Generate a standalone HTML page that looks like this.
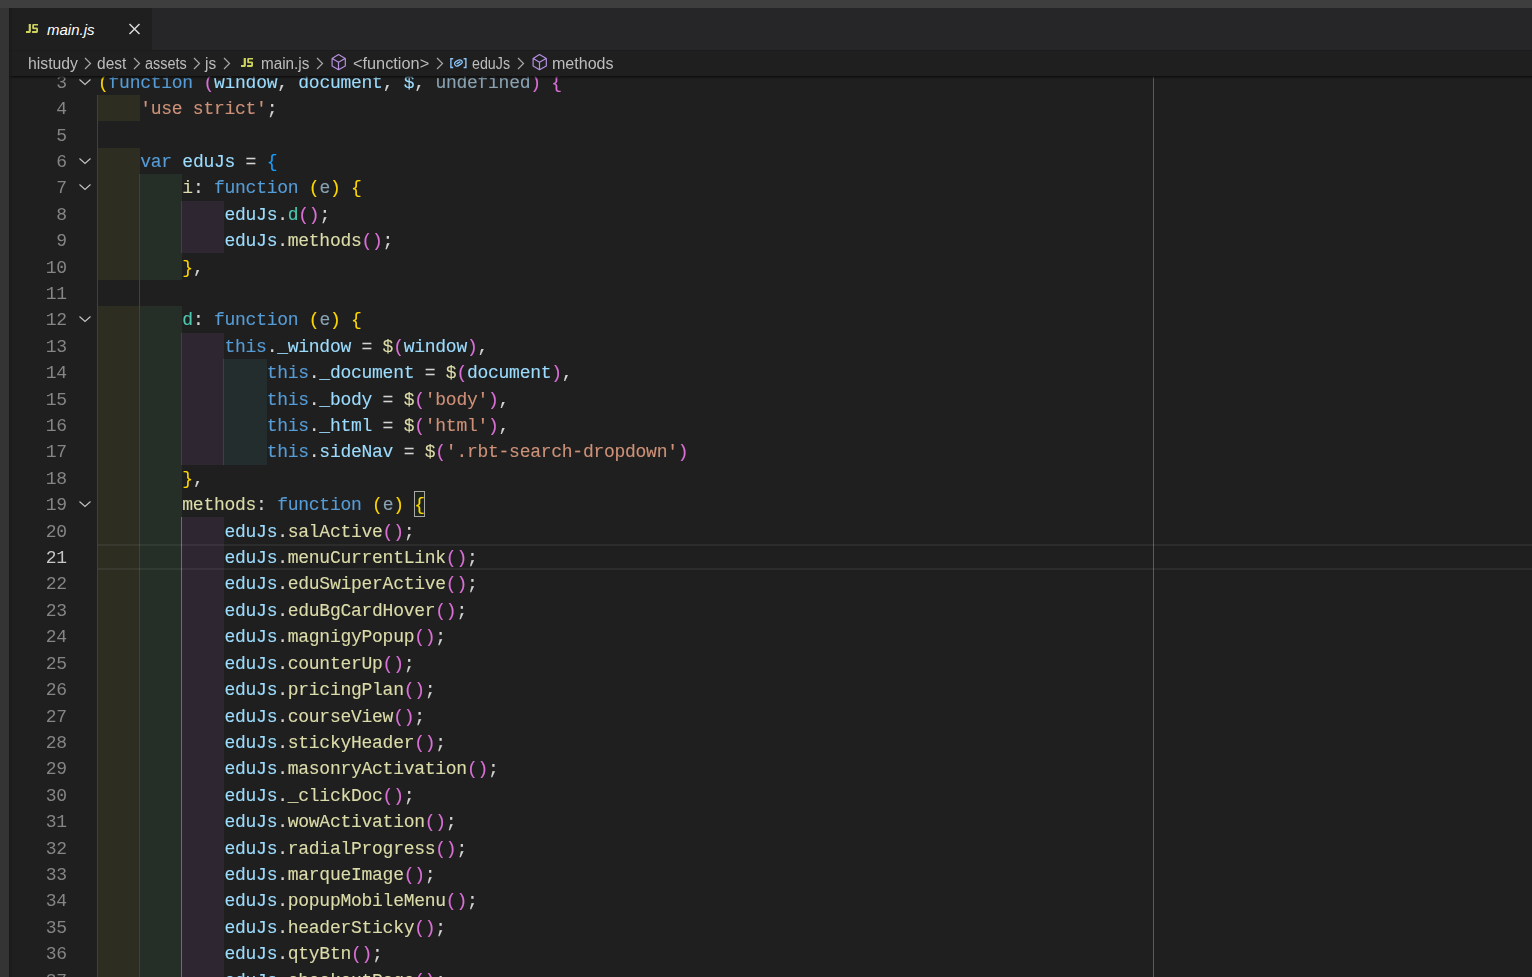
<!DOCTYPE html>
<html><head><meta charset="utf-8"><style>
html,body{margin:0;padding:0;}
body{width:1532px;height:977px;overflow:hidden;background:#1f1f1f;position:relative;font-family:"Liberation Sans",sans-serif;}
.topstrip{position:absolute;left:0;top:0;width:1532px;height:8px;background:#3e3e3e;}
.leftstrip{position:absolute;left:0;top:8px;width:9px;height:969px;background:#343434;}
.tabbar{position:absolute;left:9px;top:8px;width:1523px;height:42px;background:#262629;}
.tab{position:absolute;left:9px;top:8px;width:143px;height:42px;background:#1f1f1f;}
.crumbs{position:absolute;left:9px;top:50px;width:1523px;height:26px;background:#1f1f1f;z-index:5;box-sizing:border-box;border-top:1px solid #1c1c1c;}
.shadow{position:absolute;left:9px;top:76px;width:1523px;height:3px;background:linear-gradient(rgba(12,12,12,0.95) 0,rgba(16,16,16,0.6) 45%,rgba(20,20,20,0) 100%);z-index:5;}
.editor{position:absolute;left:9px;top:76px;width:1523px;height:901px;overflow:hidden;will-change:transform;}
.editor .inner{position:absolute;left:-9px;top:-76px;width:1532px;height:977px;}
.rb{position:absolute;}
.cur{position:absolute;left:98px;width:1434px;box-sizing:border-box;border-top:2px solid rgba(255,255,255,0.06);border-bottom:2px solid rgba(255,255,255,0.06);z-index:2;}
.ig{position:absolute;width:1px;background:#404040;}
.ig.act{background:#6e6e6e;}
.bm{position:absolute;box-sizing:border-box;border:1px solid #a8a8a8;background:rgba(0,100,0,0.08);}
.ln{position:absolute;left:98px;height:26.405px;line-height:26.405px;white-space:pre;font-family:"Liberation Mono",monospace;font-size:18px;letter-spacing:-0.262px;-webkit-text-stroke:0.12px;}
.num{position:absolute;left:9px;width:57.74px;text-align:right;height:26.405px;line-height:26.405px;font-family:"Liberation Mono",monospace;font-size:18px;letter-spacing:-0.262px;color:#858585;}
.num.act{color:#c6c6c6;}
.fold{position:absolute;left:78px;}
.ruler{position:absolute;left:1153px;top:76px;width:1px;height:901px;background:#5a5a5a;}
.ct{position:absolute;font-size:16px;color:#bdbdbd;white-space:nowrap;line-height:26px;top:50.5px;transform-origin:0 0;}
.sep{position:absolute;top:57px;}
.jsico{position:absolute;font-weight:bold;font-size:12.5px;color:#cbcb41;letter-spacing:-0.6px;line-height:12px;}
</style></head><body>
<div class="topstrip"></div>
<div class="leftstrip"></div>
<div style="position:absolute;left:9px;top:8px;width:1px;height:969px;background:#181818;z-index:8"></div><div style="position:absolute;left:11px;top:8px;width:1px;height:969px;background:#1a1a1a;z-index:8"></div>
<div class="tabbar"></div>
<div class="tab"></div>
<svg style="position:absolute;left:20.8px;top:19.8px" width="22" height="18" viewBox="0 0 22 18"><path d="M7.7 3.9 H9.9 V11.6 Q9.9 12.9 8.6 12.9 H5 V11.1 H7.7 Z" fill="#cdd35c"/><path d="M12.6 3.9 H17 V5.6 H13 V7.5 H15.6 Q17 7.5 17 8.9 V11.5 Q17 12.9 15.6 12.9 H11.1 V11.1 H15.2 V9.3 H12.6 Q11.2 9.3 11.2 7.9 V5.3 Q11.2 3.9 12.6 3.9 Z" fill="#cdd35c"/></svg>
<div style="position:absolute;left:47px;top:19px;font-style:italic;font-size:15px;color:#ffffff;line-height:22px;white-space:nowrap">main.js</div>
<svg style="position:absolute;left:128px;top:23px" width="13" height="12" viewBox="0 0 13 12"><path d="M1.5 1 L11.5 11 M11.5 1 L1.5 11" stroke="#d8d8d8" stroke-width="1.5" fill="none"/></svg>
<div class="crumbs"></div>
<div style="position:absolute;left:0;top:0;z-index:6">
<div class="ct" style="left:27.52px;transform:scaleX(0.9859)">histudy</div>
<div class="ct" style="left:96.82px;transform:scaleX(0.9694)">dest</div>
<div class="ct" style="left:145.37px;transform:scaleX(0.9022)">assets</div>
<div class="ct" style="left:205.39px;transform:scaleX(0.9649)">js</div>
<div class="ct" style="left:261.25px;transform:scaleX(0.9531)">main.js</div>
<div class="ct" style="left:352.98px;transform:scaleX(1.0191)">&lt;function&gt;</div>
<div class="ct" style="left:472.18px;transform:scaleX(0.8913)">eduJs</div>
<div class="ct" style="left:551.70px;transform:scaleX(1.0034)">methods</div>
<svg class="sep" style="left:84px" width="8" height="13" viewBox="0 0 8 13"><path d="M1 1 L6.5 6.5 L1 12" stroke="#a8a8a8" stroke-width="1.2" fill="none"/></svg>
<svg class="sep" style="left:133px" width="8" height="13" viewBox="0 0 8 13"><path d="M1 1 L6.5 6.5 L1 12" stroke="#a8a8a8" stroke-width="1.2" fill="none"/></svg>
<svg class="sep" style="left:192.5px" width="8" height="13" viewBox="0 0 8 13"><path d="M1 1 L6.5 6.5 L1 12" stroke="#a8a8a8" stroke-width="1.2" fill="none"/></svg>
<svg class="sep" style="left:222.5px" width="8" height="13" viewBox="0 0 8 13"><path d="M1 1 L6.5 6.5 L1 12" stroke="#a8a8a8" stroke-width="1.2" fill="none"/></svg>
<svg class="sep" style="left:316px" width="8" height="13" viewBox="0 0 8 13"><path d="M1 1 L6.5 6.5 L1 12" stroke="#a8a8a8" stroke-width="1.2" fill="none"/></svg>
<svg class="sep" style="left:436px" width="8" height="13" viewBox="0 0 8 13"><path d="M1 1 L6.5 6.5 L1 12" stroke="#a8a8a8" stroke-width="1.2" fill="none"/></svg>
<svg class="sep" style="left:516.5px" width="8" height="13" viewBox="0 0 8 13"><path d="M1 1 L6.5 6.5 L1 12" stroke="#a8a8a8" stroke-width="1.2" fill="none"/></svg>
<svg style="position:absolute;left:236px;top:54px" width="22" height="18" viewBox="0 0 22 18"><path d="M7.7 3.9 H9.9 V11.6 Q9.9 12.9 8.6 12.9 H5 V11.1 H7.7 Z" fill="#cdd35c"/><path d="M12.6 3.9 H17 V5.6 H13 V7.5 H15.6 Q17 7.5 17 8.9 V11.5 Q17 12.9 15.6 12.9 H11.1 V11.1 H15.2 V9.3 H12.6 Q11.2 9.3 11.2 7.9 V5.3 Q11.2 3.9 12.6 3.9 Z" fill="#cdd35c"/></svg>
<svg style="position:absolute;left:326px;top:50px" width="26" height="24" viewBox="0 0 26 24"><path d="M12.5 4.6 L19.3 8.4 L19.3 16 L12.5 19.7 L6.1 16 L6.1 8.4 Z M6.3 8.5 L12.5 12.2 L19.1 8.5 M12.5 12.2 L12.5 19.5" stroke="#b68fe0" stroke-width="1.2" fill="none" stroke-linejoin="round"/></svg>
<svg style="position:absolute;left:526.7px;top:50px" width="26" height="24" viewBox="0 0 26 24"><path d="M12.5 4.6 L19.3 8.4 L19.3 16 L12.5 19.7 L6.1 16 L6.1 8.4 Z M6.3 8.5 L12.5 12.2 L19.1 8.5 M12.5 12.2 L12.5 19.5" stroke="#b68fe0" stroke-width="1.2" fill="none" stroke-linejoin="round"/></svg>
<svg style="position:absolute;left:444px;top:52px" width="30" height="22" viewBox="0 0 30 22"><path d="M9.2 6.8 L6.9 6.8 L6.9 15.5 L9.2 15.5 M19.6 6.8 L21.9 6.8 L21.9 15.5 L19.6 15.5" stroke="#8fc4f2" stroke-width="1.4" fill="none"/><path d="M10.6 12 Q10.3 10.6 11.8 9.6 L14 8.3 Q15.3 7.6 16.8 8.2 Q18.6 9 18.3 10.4 Q18.1 11.3 16.8 12.1 L14.4 13.6 Q13.1 14.4 11.9 13.8 Q10.8 13.2 10.6 12 Z M12.6 11.9 L16.4 9.6" stroke="#8cc8ff" stroke-width="1.3" fill="none"/></svg>
</div>
<div class="shadow"></div>
<div class="editor"><div class="inner">
<div class="rb" style="left:98.00px;top:95.00px;width:42.16px;height:26.41px;background:#2d2d22"></div>
<div class="rb" style="left:98.00px;top:147.81px;width:42.16px;height:26.41px;background:#2d2d22"></div>
<div class="rb" style="left:98.00px;top:174.22px;width:42.16px;height:26.41px;background:#2d2d22"></div>
<div class="rb" style="left:140.16px;top:174.22px;width:42.16px;height:26.41px;background:#262f27"></div>
<div class="rb" style="left:98.00px;top:200.62px;width:42.16px;height:26.41px;background:#2d2d22"></div>
<div class="rb" style="left:140.16px;top:200.62px;width:42.16px;height:26.41px;background:#262f27"></div>
<div class="rb" style="left:182.32px;top:200.62px;width:42.16px;height:26.41px;background:#2e2630"></div>
<div class="rb" style="left:98.00px;top:227.03px;width:42.16px;height:26.41px;background:#2d2d22"></div>
<div class="rb" style="left:140.16px;top:227.03px;width:42.16px;height:26.41px;background:#262f27"></div>
<div class="rb" style="left:182.32px;top:227.03px;width:42.16px;height:26.41px;background:#2e2630"></div>
<div class="rb" style="left:98.00px;top:253.43px;width:42.16px;height:26.41px;background:#2d2d22"></div>
<div class="rb" style="left:140.16px;top:253.43px;width:42.16px;height:26.41px;background:#262f27"></div>
<div class="rb" style="left:98.00px;top:306.24px;width:42.16px;height:26.41px;background:#2d2d22"></div>
<div class="rb" style="left:140.16px;top:306.24px;width:42.16px;height:26.41px;background:#262f27"></div>
<div class="rb" style="left:98.00px;top:332.64px;width:42.16px;height:26.41px;background:#2d2d22"></div>
<div class="rb" style="left:140.16px;top:332.64px;width:42.16px;height:26.41px;background:#262f27"></div>
<div class="rb" style="left:182.32px;top:332.64px;width:42.16px;height:26.41px;background:#2e2630"></div>
<div class="rb" style="left:98.00px;top:359.05px;width:42.16px;height:26.41px;background:#2d2d22"></div>
<div class="rb" style="left:140.16px;top:359.05px;width:42.16px;height:26.41px;background:#262f27"></div>
<div class="rb" style="left:182.32px;top:359.05px;width:42.16px;height:26.41px;background:#2e2630"></div>
<div class="rb" style="left:224.48px;top:359.05px;width:42.16px;height:26.41px;background:#232d2e"></div>
<div class="rb" style="left:98.00px;top:385.46px;width:42.16px;height:26.41px;background:#2d2d22"></div>
<div class="rb" style="left:140.16px;top:385.46px;width:42.16px;height:26.41px;background:#262f27"></div>
<div class="rb" style="left:182.32px;top:385.46px;width:42.16px;height:26.41px;background:#2e2630"></div>
<div class="rb" style="left:224.48px;top:385.46px;width:42.16px;height:26.41px;background:#232d2e"></div>
<div class="rb" style="left:98.00px;top:411.86px;width:42.16px;height:26.41px;background:#2d2d22"></div>
<div class="rb" style="left:140.16px;top:411.86px;width:42.16px;height:26.41px;background:#262f27"></div>
<div class="rb" style="left:182.32px;top:411.86px;width:42.16px;height:26.41px;background:#2e2630"></div>
<div class="rb" style="left:224.48px;top:411.86px;width:42.16px;height:26.41px;background:#232d2e"></div>
<div class="rb" style="left:98.00px;top:438.26px;width:42.16px;height:26.41px;background:#2d2d22"></div>
<div class="rb" style="left:140.16px;top:438.26px;width:42.16px;height:26.41px;background:#262f27"></div>
<div class="rb" style="left:182.32px;top:438.26px;width:42.16px;height:26.41px;background:#2e2630"></div>
<div class="rb" style="left:224.48px;top:438.26px;width:42.16px;height:26.41px;background:#232d2e"></div>
<div class="rb" style="left:98.00px;top:464.67px;width:42.16px;height:26.41px;background:#2d2d22"></div>
<div class="rb" style="left:140.16px;top:464.67px;width:42.16px;height:26.41px;background:#262f27"></div>
<div class="rb" style="left:98.00px;top:491.08px;width:42.16px;height:26.41px;background:#2d2d22"></div>
<div class="rb" style="left:140.16px;top:491.08px;width:42.16px;height:26.41px;background:#262f27"></div>
<div class="rb" style="left:98.00px;top:517.48px;width:42.16px;height:26.41px;background:#2d2d22"></div>
<div class="rb" style="left:140.16px;top:517.48px;width:42.16px;height:26.41px;background:#262f27"></div>
<div class="rb" style="left:182.32px;top:517.48px;width:42.16px;height:26.41px;background:#2e2630"></div>
<div class="rb" style="left:98.00px;top:543.88px;width:42.16px;height:26.41px;background:#2d2d22"></div>
<div class="rb" style="left:140.16px;top:543.88px;width:42.16px;height:26.41px;background:#262f27"></div>
<div class="rb" style="left:182.32px;top:543.88px;width:42.16px;height:26.41px;background:#2e2630"></div>
<div class="rb" style="left:98.00px;top:570.29px;width:42.16px;height:26.41px;background:#2d2d22"></div>
<div class="rb" style="left:140.16px;top:570.29px;width:42.16px;height:26.41px;background:#262f27"></div>
<div class="rb" style="left:182.32px;top:570.29px;width:42.16px;height:26.41px;background:#2e2630"></div>
<div class="rb" style="left:98.00px;top:596.70px;width:42.16px;height:26.41px;background:#2d2d22"></div>
<div class="rb" style="left:140.16px;top:596.70px;width:42.16px;height:26.41px;background:#262f27"></div>
<div class="rb" style="left:182.32px;top:596.70px;width:42.16px;height:26.41px;background:#2e2630"></div>
<div class="rb" style="left:98.00px;top:623.10px;width:42.16px;height:26.41px;background:#2d2d22"></div>
<div class="rb" style="left:140.16px;top:623.10px;width:42.16px;height:26.41px;background:#262f27"></div>
<div class="rb" style="left:182.32px;top:623.10px;width:42.16px;height:26.41px;background:#2e2630"></div>
<div class="rb" style="left:98.00px;top:649.50px;width:42.16px;height:26.41px;background:#2d2d22"></div>
<div class="rb" style="left:140.16px;top:649.50px;width:42.16px;height:26.41px;background:#262f27"></div>
<div class="rb" style="left:182.32px;top:649.50px;width:42.16px;height:26.41px;background:#2e2630"></div>
<div class="rb" style="left:98.00px;top:675.91px;width:42.16px;height:26.41px;background:#2d2d22"></div>
<div class="rb" style="left:140.16px;top:675.91px;width:42.16px;height:26.41px;background:#262f27"></div>
<div class="rb" style="left:182.32px;top:675.91px;width:42.16px;height:26.41px;background:#2e2630"></div>
<div class="rb" style="left:98.00px;top:702.32px;width:42.16px;height:26.41px;background:#2d2d22"></div>
<div class="rb" style="left:140.16px;top:702.32px;width:42.16px;height:26.41px;background:#262f27"></div>
<div class="rb" style="left:182.32px;top:702.32px;width:42.16px;height:26.41px;background:#2e2630"></div>
<div class="rb" style="left:98.00px;top:728.72px;width:42.16px;height:26.41px;background:#2d2d22"></div>
<div class="rb" style="left:140.16px;top:728.72px;width:42.16px;height:26.41px;background:#262f27"></div>
<div class="rb" style="left:182.32px;top:728.72px;width:42.16px;height:26.41px;background:#2e2630"></div>
<div class="rb" style="left:98.00px;top:755.12px;width:42.16px;height:26.41px;background:#2d2d22"></div>
<div class="rb" style="left:140.16px;top:755.12px;width:42.16px;height:26.41px;background:#262f27"></div>
<div class="rb" style="left:182.32px;top:755.12px;width:42.16px;height:26.41px;background:#2e2630"></div>
<div class="rb" style="left:98.00px;top:781.53px;width:42.16px;height:26.41px;background:#2d2d22"></div>
<div class="rb" style="left:140.16px;top:781.53px;width:42.16px;height:26.41px;background:#262f27"></div>
<div class="rb" style="left:182.32px;top:781.53px;width:42.16px;height:26.41px;background:#2e2630"></div>
<div class="rb" style="left:98.00px;top:807.94px;width:42.16px;height:26.41px;background:#2d2d22"></div>
<div class="rb" style="left:140.16px;top:807.94px;width:42.16px;height:26.41px;background:#262f27"></div>
<div class="rb" style="left:182.32px;top:807.94px;width:42.16px;height:26.41px;background:#2e2630"></div>
<div class="rb" style="left:98.00px;top:834.34px;width:42.16px;height:26.41px;background:#2d2d22"></div>
<div class="rb" style="left:140.16px;top:834.34px;width:42.16px;height:26.41px;background:#262f27"></div>
<div class="rb" style="left:182.32px;top:834.34px;width:42.16px;height:26.41px;background:#2e2630"></div>
<div class="rb" style="left:98.00px;top:860.75px;width:42.16px;height:26.41px;background:#2d2d22"></div>
<div class="rb" style="left:140.16px;top:860.75px;width:42.16px;height:26.41px;background:#262f27"></div>
<div class="rb" style="left:182.32px;top:860.75px;width:42.16px;height:26.41px;background:#2e2630"></div>
<div class="rb" style="left:98.00px;top:887.15px;width:42.16px;height:26.41px;background:#2d2d22"></div>
<div class="rb" style="left:140.16px;top:887.15px;width:42.16px;height:26.41px;background:#262f27"></div>
<div class="rb" style="left:182.32px;top:887.15px;width:42.16px;height:26.41px;background:#2e2630"></div>
<div class="rb" style="left:98.00px;top:913.56px;width:42.16px;height:26.41px;background:#2d2d22"></div>
<div class="rb" style="left:140.16px;top:913.56px;width:42.16px;height:26.41px;background:#262f27"></div>
<div class="rb" style="left:182.32px;top:913.56px;width:42.16px;height:26.41px;background:#2e2630"></div>
<div class="rb" style="left:98.00px;top:939.96px;width:42.16px;height:26.41px;background:#2d2d22"></div>
<div class="rb" style="left:140.16px;top:939.96px;width:42.16px;height:26.41px;background:#262f27"></div>
<div class="rb" style="left:182.32px;top:939.96px;width:42.16px;height:26.41px;background:#2e2630"></div>
<div class="rb" style="left:98.00px;top:966.37px;width:42.16px;height:26.41px;background:#2d2d22"></div>
<div class="rb" style="left:140.16px;top:966.37px;width:42.16px;height:26.41px;background:#262f27"></div>
<div class="rb" style="left:182.32px;top:966.37px;width:42.16px;height:26.41px;background:#2e2630"></div>
<div class="cur" style="top:543.88px;height:26.41px"></div>
<div class="ig" style="left:97.00px;top:95.00px;height:897.77px"></div>
<div class="ig" style="left:139.16px;top:174.22px;height:818.56px"></div>
<div class="ig" style="left:181.32px;top:200.62px;height:52.81px"></div>
<div class="ig" style="left:181.32px;top:332.64px;height:132.03px"></div>
<div class="ig" style="left:223.48px;top:359.05px;height:105.62px"></div>
<div class="ig act" style="left:181.32px;top:517.48px;height:475.29px"></div>
<div class="bm" style="left:414.20px;top:490.78px;width:11.14px;height:26.41px"></div>
<div class="ln" style="top:69.80px"><span style="color:#ffd700">(</span><span style="color:#569cd6">function</span><span style="color:#d4d4d4"> </span><span style="color:#da70d6">(</span><span style="color:#9cdcfe">window</span><span style="color:#d4d4d4">, </span><span style="color:#9cdcfe">document</span><span style="color:#d4d4d4">, </span><span style="color:#9cdcfe">$</span><span style="color:#d4d4d4">, </span><span style="color:#8aa3b3">undefined</span><span style="color:#da70d6">)</span><span style="color:#d4d4d4"> </span><span style="color:#da70d6">{</span></div>
<div class="num" style="top:69.80px">3</div>
<svg class="fold" style="top:77.80px" width="14" height="8" viewBox="0 0 14 8"><path d="M1.5 1.5 L7 6.5 L12.5 1.5" fill="none" stroke="#c5c5c5" stroke-width="1.1"/></svg>
<div class="ln" style="top:96.20px"><span style="color:#d4d4d4">    </span><span style="color:#ce9178">&#x27;use strict&#x27;</span><span style="color:#d4d4d4">;</span></div>
<div class="num" style="top:96.20px">4</div>
<div class="ln" style="top:122.61px"></div>
<div class="num" style="top:122.61px">5</div>
<div class="ln" style="top:149.01px"><span style="color:#d4d4d4">    </span><span style="color:#569cd6">var</span><span style="color:#d4d4d4"> </span><span style="color:#9cdcfe">eduJs</span><span style="color:#d4d4d4"> = </span><span style="color:#179fff">{</span></div>
<div class="num" style="top:149.01px">6</div>
<svg class="fold" style="top:157.01px" width="14" height="8" viewBox="0 0 14 8"><path d="M1.5 1.5 L7 6.5 L12.5 1.5" fill="none" stroke="#c5c5c5" stroke-width="1.1"/></svg>
<div class="ln" style="top:175.41px"><span style="color:#d4d4d4">        </span><span style="color:#dcdcaa">i</span><span style="color:#d4d4d4">: </span><span style="color:#569cd6">function</span><span style="color:#d4d4d4"> </span><span style="color:#ffd700">(</span><span style="color:#8aa3b3">e</span><span style="color:#ffd700">)</span><span style="color:#d4d4d4"> </span><span style="color:#ffd700">{</span></div>
<div class="num" style="top:175.41px">7</div>
<svg class="fold" style="top:183.42px" width="14" height="8" viewBox="0 0 14 8"><path d="M1.5 1.5 L7 6.5 L12.5 1.5" fill="none" stroke="#c5c5c5" stroke-width="1.1"/></svg>
<div class="ln" style="top:201.82px"><span style="color:#d4d4d4">            </span><span style="color:#9cdcfe">eduJs</span><span style="color:#d4d4d4">.</span><span style="color:#4ec9b0">d</span><span style="color:#da70d6">(</span><span style="color:#da70d6">)</span><span style="color:#d4d4d4">;</span></div>
<div class="num" style="top:201.82px">8</div>
<div class="ln" style="top:228.22px"><span style="color:#d4d4d4">            </span><span style="color:#9cdcfe">eduJs</span><span style="color:#d4d4d4">.</span><span style="color:#dcdcaa">methods</span><span style="color:#da70d6">(</span><span style="color:#da70d6">)</span><span style="color:#d4d4d4">;</span></div>
<div class="num" style="top:228.22px">9</div>
<div class="ln" style="top:254.63px"><span style="color:#d4d4d4">        </span><span style="color:#ffd700">}</span><span style="color:#d4d4d4">,</span></div>
<div class="num" style="top:254.63px">10</div>
<div class="ln" style="top:281.04px"></div>
<div class="num" style="top:281.04px">11</div>
<div class="ln" style="top:307.44px"><span style="color:#d4d4d4">        </span><span style="color:#4ec9b0">d</span><span style="color:#d4d4d4">: </span><span style="color:#569cd6">function</span><span style="color:#d4d4d4"> </span><span style="color:#ffd700">(</span><span style="color:#8aa3b3">e</span><span style="color:#ffd700">)</span><span style="color:#d4d4d4"> </span><span style="color:#ffd700">{</span></div>
<div class="num" style="top:307.44px">12</div>
<svg class="fold" style="top:315.44px" width="14" height="8" viewBox="0 0 14 8"><path d="M1.5 1.5 L7 6.5 L12.5 1.5" fill="none" stroke="#c5c5c5" stroke-width="1.1"/></svg>
<div class="ln" style="top:333.84px"><span style="color:#d4d4d4">            </span><span style="color:#569cd6">this</span><span style="color:#d4d4d4">.</span><span style="color:#9cdcfe">_window</span><span style="color:#d4d4d4"> = </span><span style="color:#dcdcaa">$</span><span style="color:#da70d6">(</span><span style="color:#9cdcfe">window</span><span style="color:#da70d6">)</span><span style="color:#d4d4d4">,</span></div>
<div class="num" style="top:333.84px">13</div>
<div class="ln" style="top:360.25px"><span style="color:#d4d4d4">                </span><span style="color:#569cd6">this</span><span style="color:#d4d4d4">.</span><span style="color:#9cdcfe">_document</span><span style="color:#d4d4d4"> = </span><span style="color:#dcdcaa">$</span><span style="color:#da70d6">(</span><span style="color:#9cdcfe">document</span><span style="color:#da70d6">)</span><span style="color:#d4d4d4">,</span></div>
<div class="num" style="top:360.25px">14</div>
<div class="ln" style="top:386.66px"><span style="color:#d4d4d4">                </span><span style="color:#569cd6">this</span><span style="color:#d4d4d4">.</span><span style="color:#9cdcfe">_body</span><span style="color:#d4d4d4"> = </span><span style="color:#dcdcaa">$</span><span style="color:#da70d6">(</span><span style="color:#ce9178">&#x27;body&#x27;</span><span style="color:#da70d6">)</span><span style="color:#d4d4d4">,</span></div>
<div class="num" style="top:386.66px">15</div>
<div class="ln" style="top:413.06px"><span style="color:#d4d4d4">                </span><span style="color:#569cd6">this</span><span style="color:#d4d4d4">.</span><span style="color:#9cdcfe">_html</span><span style="color:#d4d4d4"> = </span><span style="color:#dcdcaa">$</span><span style="color:#da70d6">(</span><span style="color:#ce9178">&#x27;html&#x27;</span><span style="color:#da70d6">)</span><span style="color:#d4d4d4">,</span></div>
<div class="num" style="top:413.06px">16</div>
<div class="ln" style="top:439.46px"><span style="color:#d4d4d4">                </span><span style="color:#569cd6">this</span><span style="color:#d4d4d4">.</span><span style="color:#9cdcfe">sideNav</span><span style="color:#d4d4d4"> = </span><span style="color:#dcdcaa">$</span><span style="color:#da70d6">(</span><span style="color:#ce9178">&#x27;.rbt-search-dropdown&#x27;</span><span style="color:#da70d6">)</span></div>
<div class="num" style="top:439.46px">17</div>
<div class="ln" style="top:465.87px"><span style="color:#d4d4d4">        </span><span style="color:#ffd700">}</span><span style="color:#d4d4d4">,</span></div>
<div class="num" style="top:465.87px">18</div>
<div class="ln" style="top:492.28px"><span style="color:#d4d4d4">        </span><span style="color:#dcdcaa">methods</span><span style="color:#d4d4d4">: </span><span style="color:#569cd6">function</span><span style="color:#d4d4d4"> </span><span style="color:#ffd700">(</span><span style="color:#8aa3b3">e</span><span style="color:#ffd700">)</span><span style="color:#d4d4d4"> </span><span style="color:#ffd700">{</span></div>
<div class="num" style="top:492.28px">19</div>
<svg class="fold" style="top:500.28px" width="14" height="8" viewBox="0 0 14 8"><path d="M1.5 1.5 L7 6.5 L12.5 1.5" fill="none" stroke="#c5c5c5" stroke-width="1.1"/></svg>
<div class="ln" style="top:518.68px"><span style="color:#d4d4d4">            </span><span style="color:#9cdcfe">eduJs</span><span style="color:#d4d4d4">.</span><span style="color:#dcdcaa">salActive</span><span style="color:#da70d6">(</span><span style="color:#da70d6">)</span><span style="color:#d4d4d4">;</span></div>
<div class="num" style="top:518.68px">20</div>
<div class="ln" style="top:545.09px"><span style="color:#d4d4d4">            </span><span style="color:#9cdcfe">eduJs</span><span style="color:#d4d4d4">.</span><span style="color:#dcdcaa">menuCurrentLink</span><span style="color:#da70d6">(</span><span style="color:#da70d6">)</span><span style="color:#d4d4d4">;</span></div>
<div class="num act" style="top:545.09px">21</div>
<div class="ln" style="top:571.49px"><span style="color:#d4d4d4">            </span><span style="color:#9cdcfe">eduJs</span><span style="color:#d4d4d4">.</span><span style="color:#dcdcaa">eduSwiperActive</span><span style="color:#da70d6">(</span><span style="color:#da70d6">)</span><span style="color:#d4d4d4">;</span></div>
<div class="num" style="top:571.49px">22</div>
<div class="ln" style="top:597.90px"><span style="color:#d4d4d4">            </span><span style="color:#9cdcfe">eduJs</span><span style="color:#d4d4d4">.</span><span style="color:#dcdcaa">eduBgCardHover</span><span style="color:#da70d6">(</span><span style="color:#da70d6">)</span><span style="color:#d4d4d4">;</span></div>
<div class="num" style="top:597.90px">23</div>
<div class="ln" style="top:624.30px"><span style="color:#d4d4d4">            </span><span style="color:#9cdcfe">eduJs</span><span style="color:#d4d4d4">.</span><span style="color:#dcdcaa">magnigyPopup</span><span style="color:#da70d6">(</span><span style="color:#da70d6">)</span><span style="color:#d4d4d4">;</span></div>
<div class="num" style="top:624.30px">24</div>
<div class="ln" style="top:650.71px"><span style="color:#d4d4d4">            </span><span style="color:#9cdcfe">eduJs</span><span style="color:#d4d4d4">.</span><span style="color:#dcdcaa">counterUp</span><span style="color:#da70d6">(</span><span style="color:#da70d6">)</span><span style="color:#d4d4d4">;</span></div>
<div class="num" style="top:650.71px">25</div>
<div class="ln" style="top:677.11px"><span style="color:#d4d4d4">            </span><span style="color:#9cdcfe">eduJs</span><span style="color:#d4d4d4">.</span><span style="color:#dcdcaa">pricingPlan</span><span style="color:#da70d6">(</span><span style="color:#da70d6">)</span><span style="color:#d4d4d4">;</span></div>
<div class="num" style="top:677.11px">26</div>
<div class="ln" style="top:703.52px"><span style="color:#d4d4d4">            </span><span style="color:#9cdcfe">eduJs</span><span style="color:#d4d4d4">.</span><span style="color:#dcdcaa">courseView</span><span style="color:#da70d6">(</span><span style="color:#da70d6">)</span><span style="color:#d4d4d4">;</span></div>
<div class="num" style="top:703.52px">27</div>
<div class="ln" style="top:729.92px"><span style="color:#d4d4d4">            </span><span style="color:#9cdcfe">eduJs</span><span style="color:#d4d4d4">.</span><span style="color:#dcdcaa">stickyHeader</span><span style="color:#da70d6">(</span><span style="color:#da70d6">)</span><span style="color:#d4d4d4">;</span></div>
<div class="num" style="top:729.92px">28</div>
<div class="ln" style="top:756.33px"><span style="color:#d4d4d4">            </span><span style="color:#9cdcfe">eduJs</span><span style="color:#d4d4d4">.</span><span style="color:#dcdcaa">masonryActivation</span><span style="color:#da70d6">(</span><span style="color:#da70d6">)</span><span style="color:#d4d4d4">;</span></div>
<div class="num" style="top:756.33px">29</div>
<div class="ln" style="top:782.73px"><span style="color:#d4d4d4">            </span><span style="color:#9cdcfe">eduJs</span><span style="color:#d4d4d4">.</span><span style="color:#dcdcaa">_clickDoc</span><span style="color:#da70d6">(</span><span style="color:#da70d6">)</span><span style="color:#d4d4d4">;</span></div>
<div class="num" style="top:782.73px">30</div>
<div class="ln" style="top:809.14px"><span style="color:#d4d4d4">            </span><span style="color:#9cdcfe">eduJs</span><span style="color:#d4d4d4">.</span><span style="color:#dcdcaa">wowActivation</span><span style="color:#da70d6">(</span><span style="color:#da70d6">)</span><span style="color:#d4d4d4">;</span></div>
<div class="num" style="top:809.14px">31</div>
<div class="ln" style="top:835.54px"><span style="color:#d4d4d4">            </span><span style="color:#9cdcfe">eduJs</span><span style="color:#d4d4d4">.</span><span style="color:#dcdcaa">radialProgress</span><span style="color:#da70d6">(</span><span style="color:#da70d6">)</span><span style="color:#d4d4d4">;</span></div>
<div class="num" style="top:835.54px">32</div>
<div class="ln" style="top:861.95px"><span style="color:#d4d4d4">            </span><span style="color:#9cdcfe">eduJs</span><span style="color:#d4d4d4">.</span><span style="color:#dcdcaa">marqueImage</span><span style="color:#da70d6">(</span><span style="color:#da70d6">)</span><span style="color:#d4d4d4">;</span></div>
<div class="num" style="top:861.95px">33</div>
<div class="ln" style="top:888.35px"><span style="color:#d4d4d4">            </span><span style="color:#9cdcfe">eduJs</span><span style="color:#d4d4d4">.</span><span style="color:#dcdcaa">popupMobileMenu</span><span style="color:#da70d6">(</span><span style="color:#da70d6">)</span><span style="color:#d4d4d4">;</span></div>
<div class="num" style="top:888.35px">34</div>
<div class="ln" style="top:914.76px"><span style="color:#d4d4d4">            </span><span style="color:#9cdcfe">eduJs</span><span style="color:#d4d4d4">.</span><span style="color:#dcdcaa">headerSticky</span><span style="color:#da70d6">(</span><span style="color:#da70d6">)</span><span style="color:#d4d4d4">;</span></div>
<div class="num" style="top:914.76px">35</div>
<div class="ln" style="top:941.16px"><span style="color:#d4d4d4">            </span><span style="color:#9cdcfe">eduJs</span><span style="color:#d4d4d4">.</span><span style="color:#dcdcaa">qtyBtn</span><span style="color:#da70d6">(</span><span style="color:#da70d6">)</span><span style="color:#d4d4d4">;</span></div>
<div class="num" style="top:941.16px">36</div>
<div class="ln" style="top:967.57px"><span style="color:#d4d4d4">            </span><span style="color:#9cdcfe">eduJs</span><span style="color:#d4d4d4">.</span><span style="color:#dcdcaa">checkoutPage</span><span style="color:#da70d6">(</span><span style="color:#da70d6">)</span><span style="color:#d4d4d4">;</span></div>
<div class="num" style="top:967.57px">37</div>
<div class="ruler"></div>
</div></div>
</body></html>
